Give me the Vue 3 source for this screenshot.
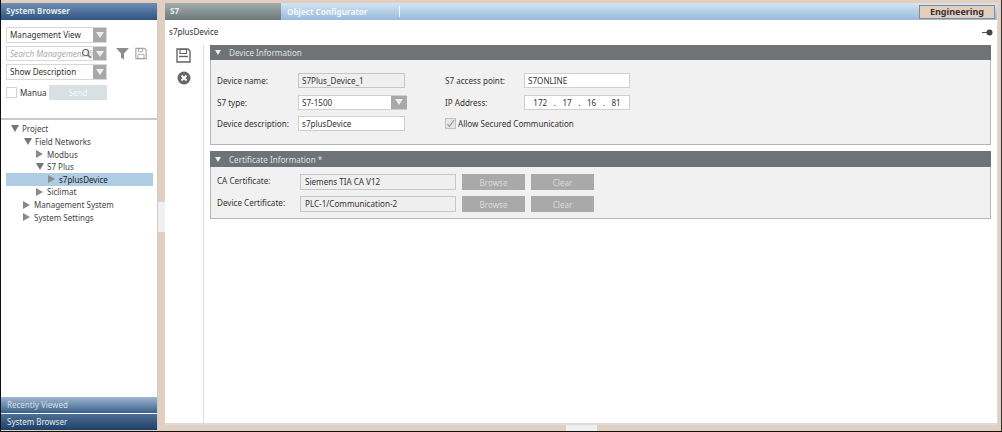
<template>
  <div class="screen">
    <aside class="sidebar">
      <div class="side-head">System Browser</div>
      <div class="filters">
        <div class="filter-rows">
          <div class="combo"><span>Management View</span><i class="arrow-box"></i></div>
          <div class="combo search">
            <span>Search Management View</span>
            <svg class="lens" viewBox="0 0 12 12"><circle cx="5" cy="5" r="3.4" fill="none" stroke="#777" stroke-width="1.3"/><path d="M7.5 7.5 11 11" stroke="#777" stroke-width="1.6"/></svg>
            <i class="arrow-box"></i>
          </div>
          <div class="combo"><span>Show Description</span><i class="arrow-box"></i></div>
          <div class="manual">
            <i class="check"></i>
            <span class="manual-label">Manua</span>
            <button class="send">Send</button>
          </div>
        </div>
        <div class="filter-icons">
          <svg width="13" height="13" viewBox="0 0 14 14"><path d="M0 1h14L8.6 7v6.5L5.4 11.5V7z" fill="#8d8d8d"/></svg>
          <svg width="12" height="13" viewBox="0 0 14 14"><path d="M1 1h10l2 2v10H1z" fill="none" stroke="#a2a2a2" stroke-width="1.3"/><path d="M4 1.5h5v3.500H4zM3.500 8h7v5h-7z" fill="none" stroke="#a2a2a2"/></svg>
        </div>
      </div>
      <div class="tree">
        <div
          v-for="node in tree"
          :key="node.label"
          class="tree-row"
          :class="{ selected: node.selected }"
          :style="{ paddingLeft: node.indent + 'px' }"
        >
          <i :class="node.open ? 'tri-down' : 'tri-right'"></i>
          <span>{{ node.label }}</span>
        </div>
      </div>
      <div class="side-tab light">Recently Viewed</div>
      <div class="side-tab dark">System Browser</div>
    </aside>

    <div class="splitter"><i class="grip"></i></div>

    <main class="main">
      <div class="tabs">
        <div class="tab-active">S7</div>
        <div class="tab-next">Object Configurator</div>
        <i class="tab-sep"></i>
        <div class="mode">Engineering</div>
      </div>
      <div class="title-row">
        <span>s7plusDevice</span>
        <svg width="11" height="7" viewBox="0 0 11 7"><path d="M0 3.500h5" stroke="#555"/><circle cx="7.500" cy="3.500" r="3" fill="#444"/></svg>
      </div>
      <div class="content">
        <div class="toolbar">
          <svg width="15" height="15" viewBox="0 0 15 15"><path d="M1 1h11l2 2v11H1z" fill="none" stroke="#666" stroke-width="1.400"/><path d="M4 1.500h6.500v4H4z" fill="none" stroke="#666" stroke-width="1.200"/><path d="M3 8.500h9" stroke="#666" stroke-width="1.400"/></svg>
          <svg width="14" height="14" viewBox="0 0 14 14"><circle cx="7" cy="7" r="6.500" fill="#666"/><path d="M4.500 4.500l5 5m0-5l-5 5" stroke="#fff" stroke-width="1.800"/></svg>
        </div>
        <div class="sections">
          <section class="panel">
            <div class="panel-head"><i class="head-tri"></i>Device Information</div>
            <div class="panel-body info">
              <div class="info-col left-col">
                <div class="field"><label>Device name:</label><div class="input readonly">S7Plus_Device_1</div></div>
                <div class="field">
                  <label>S7 type:</label>
                  <div class="input select">S7-1500<i class="arrow-box"></i></div>
                </div>
                <div class="field"><label>Device description:</label><div class="input">s7plusDevice</div></div>
              </div>
              <div class="info-col right-col">
                <div class="field"><label>S7 access point:</label><div class="input">S7ONLINE</div></div>
                <div class="field">
                  <label>IP Address:</label>
                  <div class="input ip"><span>172</span><b>.</b><span>17</span><b>.</b><span>16</span><b>.</b><span>81</span></div>
                </div>
                <div class="allow">
                  <i class="check checked">
                    <svg width="9" height="9" viewBox="0 0 9 9"><path d="M1.500 5 3.500 7.500 8 1" fill="none" stroke="#999" stroke-width="1.200"/></svg>
                  </i>
                  <span>Allow Secured Communication</span>
                </div>
              </div>
            </div>
          </section>
          <section class="panel">
            <div class="panel-head tall"><i class="head-tri"></i>Certificate Information *</div>
            <div class="panel-body certs">
              <div v-for="cert in certs" :key="cert.label" class="cert-row">
                <label>{{ cert.label }}</label>
                <div class="input readonly cert-input">{{ cert.value }}</div>
                <button class="grey-btn">Browse</button>
                <button class="grey-btn">Clear</button>
              </div>
            </div>
          </section>
        </div>
      </div>
    </main>
    <i class="bottom-grip"></i>
  </div>
</template>

<script setup>
const tree = [
  { label: 'Project', indent: 5, open: true },
  { label: 'Field Networks', indent: 18, open: true },
  { label: 'Modbus', indent: 30 },
  { label: 'S7 Plus', indent: 30, open: true },
  { label: 's7plusDevice', indent: 42, selected: true },
  { label: 'Siclimat', indent: 30 },
  { label: 'Management System', indent: 17 },
  { label: 'System Settings', indent: 17 }
]

const certs = [
  { label: 'CA Certificate:', value: 'Siemens TIA CA V12' },
  { label: 'Device Certificate:', value: 'PLC-1/Communication-2' }
]
</script>

<style scoped>
.screen {
  position: relative;
  width: 1002px;
  height: 432px;
  box-sizing: border-box;
  display: flex;
  padding: 3px 3px 1px 0;
  border-left: 1px solid #111;
  border-right: 1px solid #333;
  border-bottom: 1px solid #111;
  background: #e3cfc0;
  font-family: "Noto Sans", "Open Sans", sans-serif;
  font-size: 8.1px;
  color: #333;
  overflow: hidden;
}
.sidebar {
  width: 157px;
  flex: none;
  display: flex;
  flex-direction: column;
  background: #fff;
  border-right: 1px solid #ccc;
  box-sizing: border-box;
}
.side-head {
  height: 17px;
  line-height: 16px;
  padding-left: 5px;
  font-size: 8px;
  font-weight: 700;
  color: #dfe7f0;
  background: linear-gradient(#6f8fb4, #2e537e);
}
.filters {
  display: flex;
  height: 100px;
  flex: none;
  padding: 7px 0 0 5px;
  box-sizing: border-box;
  border-bottom: 2px solid #c9c9c9;
}
.filter-rows {
  width: 101px;
  display: flex;
  flex-direction: column;
  gap: 3px;
}
.filter-icons {
  display: flex;
  gap: 6px;
  padding: 20px 0 0 9px;
}
.combo {
  position: relative;
  height: 16px;
  box-sizing: border-box;
  border: 1px solid #d8d8d8;
  padding-left: 3px;
  line-height: 13px;
  white-space: nowrap;
  overflow: hidden;
}
.search {
  height: 15px;
  font-style: italic;
  color: #aaa;
}
.lens {
  position: absolute;
  right: 14px;
  top: 1px;
  width: 11px;
  height: 11px;
}
.arrow-box {
  position: absolute;
  right: 0;
  top: 0;
  bottom: 0;
  width: 13px;
  background: #a8a8a8;
}
.arrow-box::after {
  content: "";
  position: absolute;
  left: 3px;
  top: 4px;
  border-left: 4px solid transparent;
  border-right: 4px solid transparent;
  border-top: 6px solid #eee;
}
.manual {
  display: flex;
  align-items: center;
  margin-top: 2px;
  height: 15px;
}
.check {
  width: 9px;
  height: 9px;
  flex: none;
  display: block;
  border: 1px solid #d2d2d2;
  background: #fff;
}
.manual-label {
  margin-left: 3px;
  white-space: nowrap;
}
.send {
  width: 58px;
  height: 15px;
  margin-left: auto;
  padding: 0;
  border: 0;
  background: #d8e0e4;
  color: #f4f6f7;
  font: inherit;
}
.tree {
  flex: 1;
  padding-top: 2.7px;
  font-size: 8px;
}
.tree-row {
  height: 12.6px;
  display: flex;
  align-items: center;
  gap: 3px;
  margin: 0 4px 0 5px;
  box-sizing: border-box;
  color: #444;
}
.tree-row.selected {
  background: #aecde4;
  color: #222;
}
.tri-down {
  border-left: 4px solid transparent;
  border-right: 4px solid transparent;
  border-top: 7px solid #777;
}
.tri-right {
  margin-right: 1px;
  border-top: 4px solid transparent;
  border-bottom: 4px solid transparent;
  border-left: 7px solid #8a8a8a;
}
.side-tab {
  height: 16px;
  flex: none;
  line-height: 15px;
  padding-left: 6px;
  font-size: 8px;
}
.light {
  margin-bottom: 1px;
  color: #d5dde6;
  background: linear-gradient(#9fb7d0, #38608a);
}
.dark {
  color: #e4eaf0;
  background: linear-gradient(#4f6f95, #1e3f66);
}
.splitter {
  width: 7px;
  flex: none;
  display: flex;
  align-items: center;
}
.grip {
  width: 7px;
  height: 30px;
  background: #f0f0f0;
}
.bottom-grip {
  position: absolute;
  left: 565px;
  bottom: 0;
  width: 31px;
  height: 6px;
  background: #f0f0f0;
}
.main {
  flex: 1;
  display: flex;
  flex-direction: column;
  background: #fff;
  min-width: 0;
  border-bottom: 2px solid #dcdcdc;
  border-right: 1px solid #dcdcdc;
  margin-bottom: 5px;
}
.tabs {
  height: 17px;
  flex: none;
  display: flex;
  align-items: center;
  background: linear-gradient(#d3e4f3, #97bbdc);
  font-size: 8.1px;
  font-weight: 700;
  color: #f2f7fb;
}
.tab-active {
  width: 116px;
  height: 17px;
  line-height: 16px;
  box-sizing: border-box;
  padding-left: 5px;
  color: #e9eeee;
  background: linear-gradient(#a3acac, #6c7a7a);
}
.tab-next {
  width: 112px;
  padding-left: 6px;
  box-sizing: border-box;
}
.tab-sep {
  width: 1px;
  height: 11px;
  margin-left: 6px;
  background: #f4f8fc;
}
.mode {
  margin-left: auto;
  margin-right: 2px;
  width: 76px;
  height: 14px;
  box-sizing: border-box;
  line-height: 12px;
  text-align: center;
  font-size: 9px;
  color: #333;
  background: #e3cfc0;
  border: 1px solid #8a8a8a;
}
.title-row {
  height: 25px;
  flex: none;
  display: flex;
  align-items: center;
  justify-content: space-between;
  box-sizing: border-box;
  padding: 0 4px 2px 4px;
}
.title-row svg {
  margin-top: 2px;
}
.content {
  flex: 1;
  display: flex;
  min-height: 0;
}
.toolbar {
  width: 39px;
  flex: none;
  box-sizing: border-box;
  border-right: 1px solid #ddd;
  display: flex;
  flex-direction: column;
  align-items: center;
  gap: 8px;
  padding: 3px 1px 0 0;
}
.sections {
  flex: 1;
  padding: 0 6px 0 6px;
  display: flex;
  flex-direction: column;
  gap: 6px;
}
.panel {
  background: #f1f1f1;
  border: 1px solid #b4b4b4;
  border-top: 0;
}
.panel-head {
  height: 15px;
  margin: 0 -1px;
  display: flex;
  align-items: center;
  gap: 8px;
  padding-left: 5px;
  background: #6f7375;
  color: #dfe1e1;
}
.panel-head.tall {
  height: 16px;
}
.head-tri {
  border-left: 3.5px solid transparent;
  border-right: 3.5px solid transparent;
  border-top: 5px solid #eee;
}
.panel-body.info {
  display: flex;
  height: 84px;
  box-sizing: border-box;
  padding: 13px 0 0 6px;
}
.info-col {
  display: flex;
  flex-direction: column;
  gap: 6.5px;
}
.left-col {
  width: 228px;
  --label: 81px;
  --field: 107px;
}
.right-col {
  --label: 79px;
  --field: 106px;
}
.field {
  display: flex;
  align-items: center;
  height: 15px;
}
.field label {
  width: var(--label);
}
.input {
  position: relative;
  width: var(--field);
  height: 15px;
  box-sizing: border-box;
  border: 1px solid #cfcfcf;
  background: #fff;
  line-height: 13px;
  padding-left: 3px;
  color: #333;
}
.input.readonly {
  background: #efefef;
  border-color: #c6c6c6;
}
.select {
  width: 109px;
  border-right: 0;
}
.select .arrow-box {
  width: 16px;
}
.select .arrow-box::after {
  left: 4px;
  top: 3px;
}
.ip {
  display: flex;
  justify-content: space-around;
  padding: 0 5px;
}
.ip b {
  font-weight: 400;
}
.allow {
  display: flex;
  align-items: center;
  gap: 2px;
  height: 15px;
}
.check.checked {
  width: 9px;
  height: 9px;
  background: #e6e6e6;
  border-color: #c0c0c0;
}
.check svg {
  display: block;
}
.certs {
  height: 51px;
  box-sizing: border-box;
  padding: 7px 0 0 6px;
  display: flex;
  flex-direction: column;
  gap: 6px;
}
.cert-row {
  display: flex;
  align-items: center;
  height: 16px;
}
.cert-row label {
  width: 83px;
  margin-top: -3px;
}
.cert-input {
  width: 156px;
  height: 16px;
  line-height: 14px;
  padding-left: 4px;
}
.grey-btn {
  width: 63px;
  height: 16px;
  margin-left: 6px;
  padding: 0;
  border: 0;
  background: #a9a9a9;
  color: #d9d9d9;
  font: inherit;
}
</style>
